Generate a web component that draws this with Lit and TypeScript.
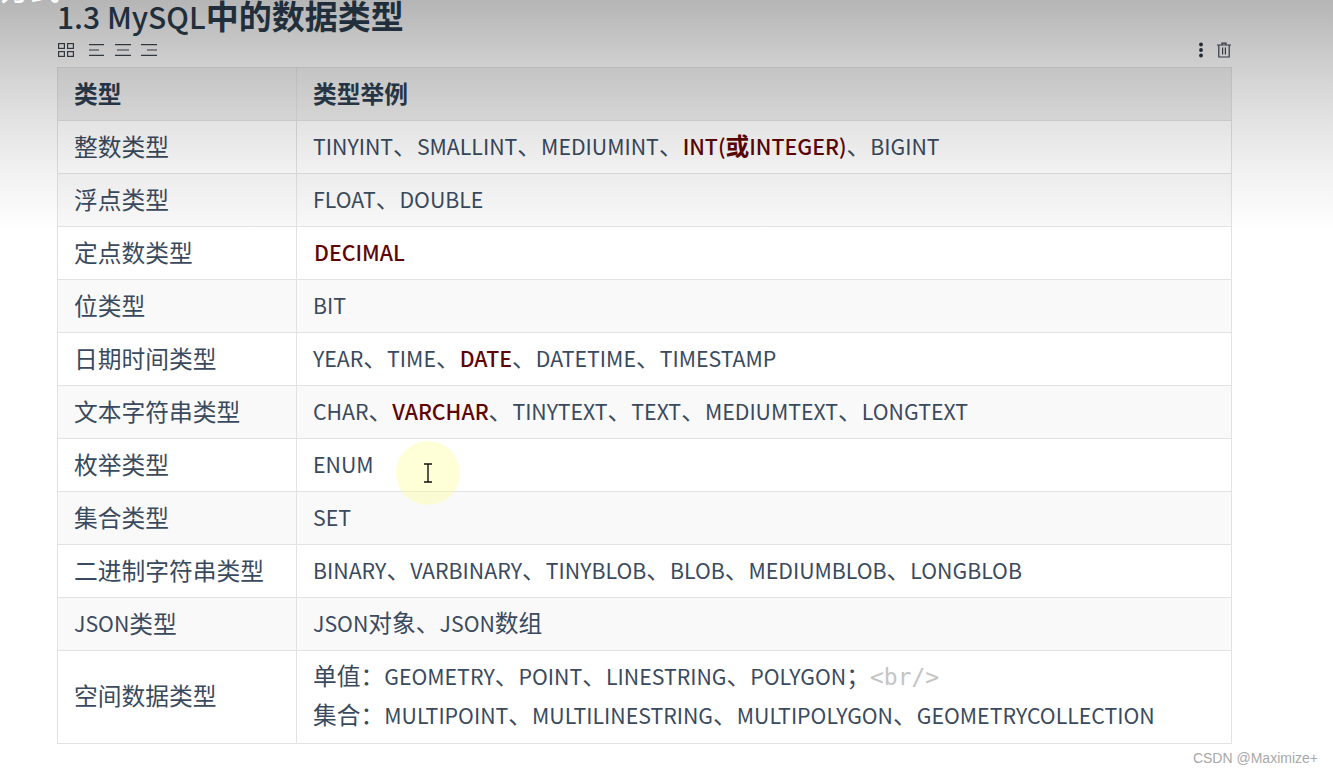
import { LitElement, html, css, svg } from "lit";
import { customElement } from "lit/decorators.js";

/* Latin text in the reference is set smaller than the CJK text around it. */
const t = (s: string) =>
  s
    .split(/([\u3000-\u30ff\u4e00-\u9fff\uff00-\uffef]+)/)
    .filter(Boolean)
    .map((p) =>
      /^[\u3000-\u30ff\u4e00-\u9fff\uff00-\uffef]/.test(p)
        ? html`<span class="cjk">${p}</span>`
        : p
    );

type Row = { name: string; value: unknown };
const b = (s: string) => html`<strong class="hl">${t(s)}</strong>`;

const rows: Row[] = [
  { name: "整数类型", value: html`${t("TINYINT、SMALLINT、MEDIUMINT、")}${b("INT(或INTEGER)")}${t("、BIGINT")}` },
  { name: "浮点类型", value: t("FLOAT、DOUBLE") },
  { name: "定点数类型", value: html`<span class="nudge">${b("DECIMAL")}</span>` },
  { name: "位类型", value: "BIT" },
  { name: "日期时间类型", value: html`${t("YEAR、TIME、")}${b("DATE")}${t("、DATETIME、TIMESTAMP")}` },
  { name: "文本字符串类型", value: html`${t("CHAR、")}${b("VARCHAR")}${t("、TINYTEXT、TEXT、MEDIUMTEXT、LONGTEXT")}` },
  { name: "枚举类型", value: "ENUM" },
  { name: "集合类型", value: "SET" },
  { name: "二进制字符串类型", value: t("BINARY、VARBINARY、TINYBLOB、BLOB、MEDIUMBLOB、LONGBLOB") },
  { name: "JSON类型", value: t("JSON对象、JSON数组") },
  {
    name: "空间数据类型",
    value: html`<div class="ln">${t("单值：GEOMETRY、POINT、LINESTRING、POLYGON；")}<span class="code">&lt;br/&gt;</span></div>
      <div class="ln">${t("集合：MULTIPOINT、MULTILINESTRING、MULTIPOLYGON、GEOMETRYCOLLECTION")}</div>`,
  },
];

const icon = (w: number, body: unknown) =>
  html`<svg width="${w}" height="16" viewBox="0 0 ${w} 16" fill="none" stroke="#3c4650" stroke-width="1.2">${body}</svg>`;

@customElement("app-root")
export class AppRoot extends LitElement {
  static styles = css`
    :host {
      display: block;
      position: relative;
      height: 773px;
      overflow: hidden;
      background: #fff;
      font-family: "Noto Sans CJK SC", "Noto Sans", sans-serif;
      color: #3a4a5e;
    }
    .page {
      padding: 0 101px 0 57px;
      display: flex;
      flex-direction: column;
    }
    h1 {
      margin: 0;
      height: 35px;
      font-size: 30px;
      line-height: 30px;
      font-weight: 500;
      color: #2c3e50;
      white-space: nowrap;
    }
    h1 strong {
      font-size: 33px;
      font-weight: 700;
    }
    .tools {
      height: 32px;
      display: flex;
      align-items: center;
      justify-content: space-between;
      padding: 0 1px 2px 1px;
      box-sizing: border-box;
    }
    .group {
      display: flex;
      align-items: center;
      gap: 10px;
    }
    .group.right {
      gap: 13px;
    }
    .group svg {
      display: block;
    }
    .group.left svg:first-child {
      margin-right: 5px;
    }
    table {
      width: 100%;
      table-layout: fixed;
      border-collapse: collapse;
      font-size: 21.3px;
    }
    th,
    td {
      border: 1px solid #e2e2e2;
      padding: 0 16px 4px;
      height: 48px;
      box-sizing: content-box;
      text-align: left;
      white-space: nowrap;
      line-height: 39px;
      font-weight: 400;
    }
    .cjk,
    .big {
      font-size: 23.75px;
    }
    td.name .cjk {
      vertical-align: -1px;
    }
    th {
      font-weight: 700;
      background: #f0f0f0;
      color: #2c3e50;
    }
    .c1 {
      width: 206px;
    }
    tbody tr:nth-child(even) td {
      background: #f9f9f9;
    }
    .hl {
      color: #5f0505;
      font-weight: 500;
    }
    .hl .cjk {
      font-weight: 700;
    }
    .nudge {
      margin-left: 1px;
    }
    .code {
      font-family: "DejaVu Sans Mono", "Liberation Mono", monospace;
      font-size: 23px;
      color: #c4c4c4;
    }
    .ln {
      height: 39px;
    }
    tr.tall td {
      height: 86px;
      padding-bottom: 6px;
    }
    .shade {
      position: absolute;
      inset: 0 0 auto 0;
      height: 232px;
      pointer-events: none;
      background: linear-gradient(
        to bottom,
        rgba(0, 0, 0, 0.29) 0,
        rgba(0, 0, 0, 0.18) 70px,
        rgba(0, 0, 0, 0.105) 125px,
        rgba(0, 0, 0, 0.05) 175px,
        rgba(0, 0, 0, 0) 232px
      );
    }
    .cap {
      position: absolute;
      left: 0;
      top: -31px;
      font-size: 30px;
      line-height: 36px;
      font-weight: 500;
      color: #fff;
    }
    .halo {
      position: absolute;
      left: 396px;
      top: 441px;
      width: 64px;
      height: 64px;
      border-radius: 50%;
      background: rgba(255, 255, 160, 0.42);
      pointer-events: none;
    }
    .caret {
      position: absolute;
      left: 423px;
      top: 463px;
      display: block;
    }
    .mark {
      position: absolute;
      right: 15px;
      top: 749px;
      font-family: "Liberation Sans", Arial, sans-serif;
      font-size: 14px;
      line-height: 18px;
      color: #a8a8a8;
    }
  `;

  render() {
    return html`
      <div class="page">
        <h1>1.3 MySQL<strong>中的数据类型</strong></h1>
        <div class="tools">
          <div class="group left">
            ${icon(16, svg`<rect x=".6" y="1.6" width="5.8" height="4.8"/><rect x="9.6" y="1.6" width="5.8" height="4.8"/><rect x=".6" y="9.6" width="5.8" height="4.8"/><rect x="9.6" y="9.6" width="5.8" height="4.8"/>`)}
            ${icon(16, svg`<path d="M0 2.6h15M0 8h10M0 13.4h15"/>`)}
            ${icon(16, svg`<path d="M0 2.6h16M2 8h12M0 13.4h16"/>`)}
            ${icon(16, svg`<path d="M0 2.6h16M6 8h10M0 13.4h16"/>`)}
          </div>
          <div class="group right">
            <svg width="6" height="16" viewBox="0 0 6 16" fill="#2c3440"><circle cx="3" cy="2.5" r="1.9"/><circle cx="3" cy="8" r="1.9"/><circle cx="3" cy="13.5" r="1.9"/></svg>
            ${icon(14, svg`<path d="M0 3h14M5 3V1.2h4V3M1.8 3v12h10.4V3M5.6 5.5v7M8.4 5.5v7"/>`)}
          </div>
        </div>
        <table>
          <thead>
            <tr><th class="c1 big">类型</th><th class="big">类型举例</th></tr>
          </thead>
          <tbody>
            ${rows.map(
              (r, i) => html`<tr class="${i === rows.length - 1 ? "tall" : ""}">
                <td class="name">${t(r.name)}</td>
                <td>${r.value}</td>
              </tr>`
            )}
          </tbody>
        </table>
      </div>
      <div class="shade"></div>
      <div class="cap">方式</div>
      <div class="halo"></div>
      <svg class="caret" width="10" height="20" viewBox="0 0 10 20" fill="none" stroke="#111" stroke-width="1.4"><path d="M1 1h8M5 1v18M1 19h8"/></svg>
      <div class="mark">CSDN @Maximize+</div>
    `;
  }
}
